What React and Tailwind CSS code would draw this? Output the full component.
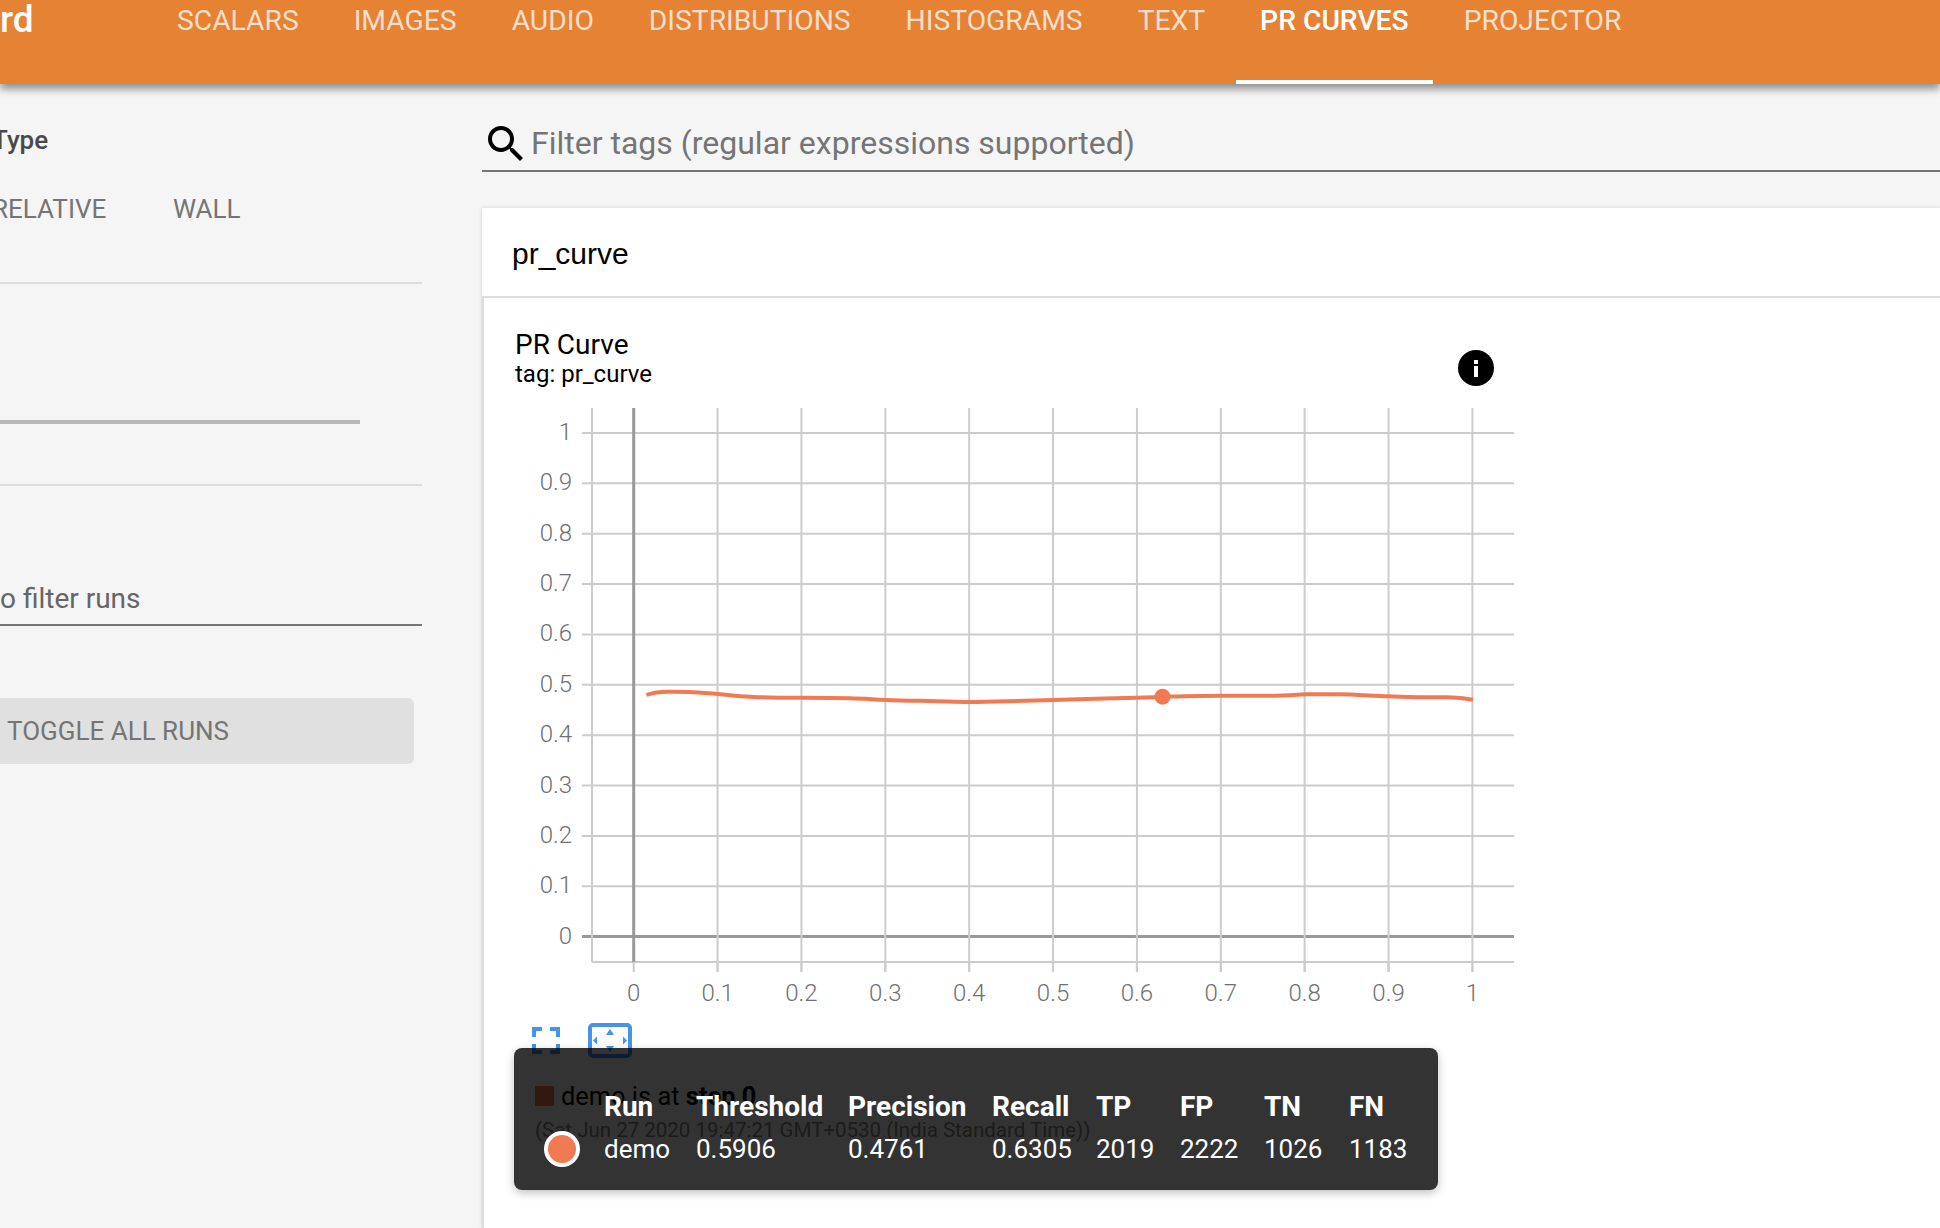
import React from "react";

const tabs = ["SCALARS", "IMAGES", "AUDIO", "DISTRIBUTIONS", "HISTOGRAMS", "TEXT", "PR CURVES", "PROJECTOR"];

const xTicks = ["0", "0.1", "0.2", "0.3", "0.4", "0.5", "0.6", "0.7", "0.8", "0.9", "1"];
const yTicks = ["1", "0.9", "0.8", "0.7", "0.6", "0.5", "0.4", "0.3", "0.2", "0.1", "0"];

const columns = [
  { label: "Run", value: "demo" },
  { label: "Threshold", value: "0.5906" },
  { label: "Precision", value: "0.4761" },
  { label: "Recall", value: "0.6305" },
  { label: "TP", value: "2019" },
  { label: "FP", value: "2222" },
  { label: "TN", value: "1026" },
  { label: "FN", value: "1183" },
];

// chart svg sits at page (550, 400)
const X0 = 83.7;
const XSTEP = 83.87;
const Y0 = 33;
const YSTEP = 50.36;

const curve =
  "M96.4 295 C103 292.5 110 291.7 118 291.7 S130 291.6 139 292 S155 293 168 294 S185 296 200 296.7 S215 297.6 229 297.7 S245 297.7 252 297.7 S285 298 300 298.3 S322 299.4 336 300 S362 300.7 379 301 S405 302 419 302 S440 301.8 457 301.3 S490 300.4 503 300 S560 298.2 587 297.7 S600 297 612.5 296.7 S650 295.7 671 295.7 S710 295.7 725 295.7 S745 294.5 757 294.3 S775 294.2 789 294.3 S820 295.6 838 296.3 S855 297.2 868 297.3 S885 297.3 896 297.3 S912 298.2 923 299.7";

function Chart() {
  return (
    <svg width="1000" height="610" viewBox="0 0 1000 610" className="block ml-[35px] overflow-visible">
      {yTicks.map((t, i) => {
        const y = Y0 + i * YSTEP;
        return (
          <g key={t}>
            <line x1="32" x2="964" y1={y} y2={y} stroke={t === "0" ? "#999999" : "#cccccc"} strokeWidth={t === "0" ? 3 : 2} />
            <text x="22" y={y + 7} textAnchor="end" fontFamily="Roboto, sans-serif" fontWeight="300" fontSize="24" fill="#707070">
              {t}
            </text>
          </g>
        );
      })}
      <line x1="42" x2="42" y1="8" y2="562" stroke="#cccccc" strokeWidth="2" />
      <line x1="42" x2="964" y1="562" y2="562" stroke="#cccccc" strokeWidth="2" />
      {xTicks.map((t, i) => {
        const x = X0 + i * XSTEP;
        return (
          <g key={t}>
            <line x1={x} x2={x} y1="8" y2={i === 0 ? 562 : 572} stroke={i === 0 ? "#999999" : "#cccccc"} strokeWidth={i === 0 ? 3 : 2} />
            <line x1={x} x2={x} y1="562" y2="572" stroke="#cccccc" strokeWidth="2" />
            <text x={x} y="601" textAnchor="middle" fontFamily="Roboto, sans-serif" fontWeight="300" fontSize="24" fill="#707070">
              {t}
            </text>
          </g>
        );
      })}
      <path d={curve} fill="none" stroke="#f27a52" strokeWidth="4" />
      <circle cx="612.5" cy="296.7" r="8" fill="#f27a52" />
    </svg>
  );
}

function SearchIcon() {
  return (
    <svg width="48" height="48" viewBox="0 0 24 24" fill="#000000" className="shrink-0">
      <path d="M15.5 14h-.79l-.28-.27C15.41 12.59 16 11.11 16 9.5 16 5.91 13.09 3 9.5 3S3 5.91 3 9.5 5.91 16 9.5 16c1.61 0 3.09-.59 4.23-1.57l.27.28v.79l5 4.99L20.49 19l-4.99-5zm-6 0C7.01 14 5 11.99 5 9.5S7.01 5 9.5 5 14 7.01 14 9.5 11.99 14 9.5 14z" />
    </svg>
  );
}

function InfoIcon() {
  return (
    <svg width="36" height="36" viewBox="0 0 36 36" className="shrink-0 mt-[21px]">
      <circle cx="18" cy="18" r="18" fill="#000000" />
      <rect x="16" y="10" width="4" height="4" fill="#ffffff" />
      <rect x="16" y="16" width="4" height="11" fill="#ffffff" />
    </svg>
  );
}

function FitIcon() {
  return (
    <svg width="28" height="27" viewBox="0 0 28 27" fill="none" stroke="#4593ea" strokeWidth="4">
      <path d="M2 10V2H10" />
      <path d="M18 2H26V10" />
      <path d="M2 17V25H10" />
      <path d="M18 25H26V17" />
    </svg>
  );
}

function PanIcon() {
  return (
    <svg width="44" height="35" viewBox="0 0 44 35">
      <rect x="2" y="2" width="40" height="31" rx="3" fill="none" stroke="#4593ea" strokeWidth="4" />
      <path d="M22 6L26 12H18Z" fill="#4593ea" />
      <path d="M22 29L26 23H18Z" fill="#4593ea" />
      <path d="M5 17.5L9 13.5V21.5Z" fill="#4593ea" />
      <path d="M39 17.5L35 13.5V21.5Z" fill="#4593ea" />
    </svg>
  );
}

function Tooltip() {
  return (
    <div className="absolute left-[30px] top-[750px] w-[924px] h-[142px] rounded-lg bg-black/80 text-white shadow-[0_3px_8px_rgba(0,0,0,0.25)] font-['Roboto',sans-serif] text-[26px] leading-[30px]">
      <div className="absolute left-[30px] top-[83px] w-[36px] h-[36px] rounded-full bg-[#f27a52] border-[4px] border-white" />
      <div className="grid grid-cols-[92px_152px_144px_104px_84px_84px_85px_80px] pl-[90px] pt-[44px] gap-y-[12px]">
        {columns.map((c) => (
          <div key={c.label} className="font-bold text-[28px]">{c.label}</div>
        ))}
        {columns.map((c) => (
          <div key={c.label}>{c.value}</div>
        ))}
      </div>
    </div>
  );
}

export default function App() {
  return (
    <div className="w-[1940px] h-[1228px] overflow-hidden flex flex-col bg-[#f5f5f5] font-['Roboto',sans-serif]">
      <header className="relative z-10 h-[84px] shrink-0 flex bg-[#e68234] shadow-[0_5px_8px_rgba(0,0,0,0.42)]">
        <div className="w-[153px] shrink-0 pt-[2px] text-[37px] leading-[36px] font-medium text-white overflow-hidden">rd</div>
        <nav className="flex gap-[7px]">
          {tabs.map((t) =>
            t === "PR CURVES" ? (
              <div key={t} className="h-[84px] px-[24px] pt-[6px] text-[28.25px] leading-[30px] font-medium text-white border-b-4 border-white whitespace-nowrap">
                {t}
              </div>
            ) : (
              <div key={t} className="h-[84px] px-[24px] pt-[6px] text-[28.25px] leading-[30px] font-normal text-white/75 whitespace-nowrap">
                {t}
              </div>
            )
          )}
        </nav>
      </header>

      <div className="flex-1 flex min-h-0">
        <aside className="w-[482px] shrink-0 pr-[60px] overflow-hidden">
          <div className="h-[200px] border-b-2 border-[#dddddd] pt-[41px]">
            <div className="-ml-[8px] text-[26px] leading-[30px] font-medium text-[#4a4a4a]">Type</div>
            <div className="mt-[39px] flex text-[26px] leading-[30px] text-[#757575]">
              <span className="-ml-[8px] w-[181px]">RELATIVE</span>
              <span>WALL</span>
            </div>
          </div>
          <div className="h-[202px] border-b-2 border-[#dddddd] pt-[136px]">
            <div className="w-[360px] h-[4px] bg-[#b8b8b8]" />
          </div>
          <div className="h-[140px] border-b-2 border-[#757575] pt-[98px] text-[28px] leading-[30px] text-[#666666]">
            o filter runs
          </div>
          <div className="mt-[72px] -ml-[10px] w-[424px] h-[66px] rounded-md bg-[#e0e0e0] pl-[17px] flex items-center text-[26px] text-[#757575]">
            TOGGLE ALL RUNS
          </div>
        </aside>

        <main className="flex-1 min-w-0 flex flex-col">
          <div className="h-[88px] shrink-0 border-b-2 border-[#757575] pt-[36px] flex items-start">
            <SearchIcon />
            <span className="text-[32px] leading-[46px] text-[#757575] ml-[1px] whitespace-nowrap">
              Filter tags (regular expressions supported)
            </span>
          </div>
          <div className="mt-[36px] flex-1 flex flex-col bg-white shadow-[0_0_4px_rgba(0,0,0,0.15)]">
            <div className="h-[90px] shrink-0 border-b-2 border-[#dddddd] pl-[30px] pt-[29px] text-[30px] leading-[34px] text-black font-['Liberation_Sans',sans-serif]">
              pr_curve
            </div>
            <div className="relative flex-1 border-l-2 border-[#dddddd] pl-[31px] pt-[32px] text-black">
              <div className="flex justify-between w-[979px] -mt-[1px]">
                <div>
                  <div className="text-[28px] leading-[30px] pt-[1px]">PR Curve</div>
                  <div className="text-[24px] leading-[28px]">tag: pr_curve</div>
                </div>
                <InfoIcon />
              </div>
              <div className="mt-[12px]">
                <Chart />
              </div>
              <div className="ml-[17px] mt-[13px] flex items-center gap-[28px]">
                <FitIcon />
                <PanIcon />
              </div>
              <div className="ml-[20px] mt-[23px] flex items-center h-[30px] text-[25.4px] leading-[30px]">
                <span className="w-[19px] h-[20px] bg-[#f27a52] mr-[7px]" />
                <span>demo is at <b>step 0</b></span>
              </div>
              <div className="ml-[20px] mt-[5px] text-[20.5px] leading-[28px] text-[#888888] whitespace-nowrap">
                (Sat Jun 27 2020 19:47:21 GMT+0530 (India Standard Time))
              </div>
              <Tooltip />
            </div>
          </div>
        </main>
      </div>
    </div>
  );
}
